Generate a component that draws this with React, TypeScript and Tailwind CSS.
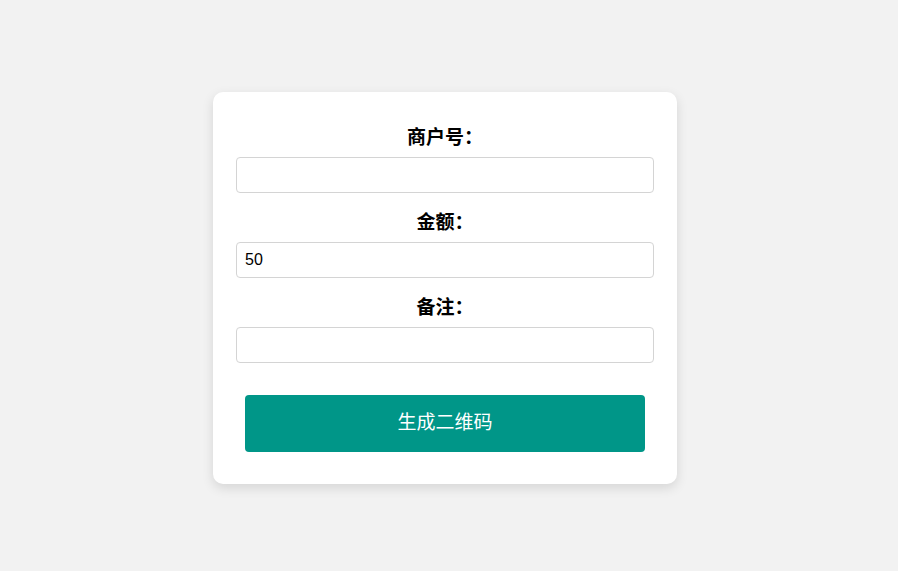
import React from "react";

export default function App() {
  const font = { fontFamily: '"Liberation Sans", "Noto Sans CJK SC", sans-serif' };
  return (
    <div className="w-full min-h-[571px] bg-[#f2f2f2] pt-[92px] pr-[8px] flex justify-center" style={font}>
      <div className="w-[464px] h-[392px] bg-white rounded-[10px] shadow-[0_4px_12px_rgba(0,0,0,0.12)] px-[23px] pt-[34px] flex flex-col">
        {[
          { label: "商户号：", value: "" },
          { label: "金额：", value: "50" },
          { label: "备注：", value: "" },
        ].map((f, i) => (
          <div key={i} className={i < 2 ? "mb-[18px]" : ""}>
            <div className="text-center text-[19px] leading-[24px] font-bold text-black mb-[7px]">{f.label}</div>
            <input
              defaultValue={f.value}
              className="w-full h-[36px] border border-[#d4d4d4] rounded-[4px] px-[8px] text-[16px] text-black outline-none bg-white"
              style={font}
            />
          </div>
        ))}
        <div className="px-[9px] mt-[32px]">
          <button className="w-full h-[57px] bg-[#009688] rounded-[4px] text-white text-[19px] font-normal" style={font}>
            生成二维码
          </button>
        </div>
      </div>
    </div>
  );
}
